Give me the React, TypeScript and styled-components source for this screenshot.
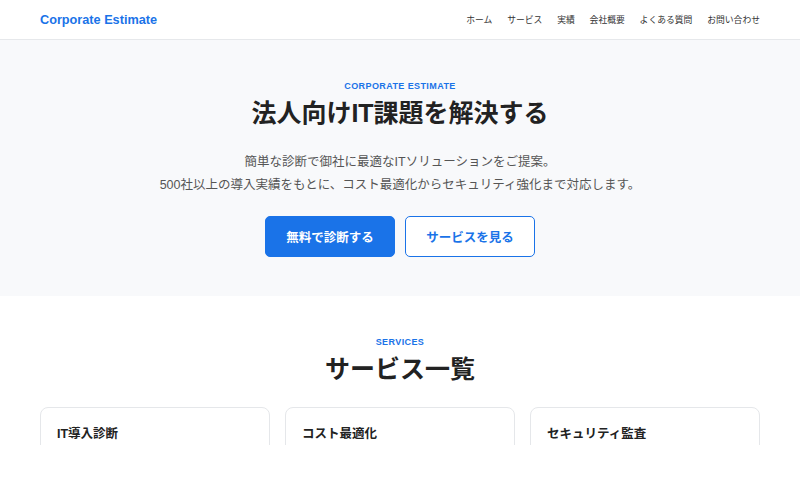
import React from "react";
import styled, { createGlobalStyle } from "styled-components";

const Global = createGlobalStyle`
  * { box-sizing: border-box; }
  html, body { margin: 0; padding: 0; background: #ffffff; }
  body {
    font-family: "Liberation Sans", "Noto Sans CJK JP", sans-serif;
    color: #222;
    -webkit-font-smoothing: antialiased;
  }
`;

const Page = styled.div`
  height: 445px;
  overflow: hidden;
  background: #fff;
`;

const Header = styled.header`
  height: 40px;
  border-bottom: 1px solid #e6e8eb;
  display: flex;
  align-items: center;
  justify-content: space-between;
  padding: 0 40px;
  background: #fff;
`;

const Logo = styled.div`
  color: #1a73e8;
  font-weight: 700;
  font-size: 12.7px;
`;

const Nav = styled.nav`
  display: flex;
  gap: 14.8px;
`;

const NavLink = styled.a`
  font-size: 8.8px;
  color: #333;
  text-decoration: none;
  font-family: "Noto Sans CJK JP", sans-serif;
`;

const Hero = styled.section`
  background: #f8f9fb;
  height: 256px;
  display: flex;
  flex-direction: column;
  align-items: center;
  padding-top: 40px;
`;

const Eyebrow = styled.div`
  color: #1a73e8;
  font-size: 9px;
  font-weight: 700;
  letter-spacing: 0.4px;
  line-height: 12px;
`;

const Title = styled.h1<{ $size: number }>`
  margin: 4px 0 0;
  font-size: ${(p) => p.$size}px;
  font-weight: 700;
  color: #222;
  line-height: 1.4;
  font-family: "Liberation Sans", "Noto Sans CJK JP", sans-serif;
`;

const Lead = styled.p`
  margin: 20px 0 0;
  font-size: 12.5px;
  line-height: 23px;
  color: #555;
  text-align: center;
`;

const Actions = styled.div`
  display: flex;
  gap: 10px;
  margin-top: 19px;
`;

const Button = styled.a<{ $primary?: boolean }>`
  width: 130px;
  height: 41px;
  display: flex;
  align-items: center;
  justify-content: center;
  border-radius: 5px;
  font-size: 12.5px;
  font-weight: 700;
  text-decoration: none;
  border: 1.5px solid #1a73e8;
  background: ${(p) => (p.$primary ? "#1a73e8" : "#fff")};
  color: ${(p) => (p.$primary ? "#fff" : "#1a73e8")};
`;

const Services = styled.section`
  display: flex;
  flex-direction: column;
  align-items: center;
  padding: 40px 40px 0;
`;

const Cards = styled.div`
  display: grid;
  grid-template-columns: repeat(3, 1fr);
  gap: 15px;
  width: 100%;
  margin-top: 20px;
`;

const Card = styled.div`
  border: 1px solid #e5e7ea;
  border-radius: 8px;
  height: 120px;
  padding: 17px 16px;
`;

const CardTitle = styled.h3`
  margin: 0;
  font-size: 12.5px;
  font-weight: 700;
  color: #222;
  line-height: 18px;
`;

const nav = ["ホーム", "サービス", "実績", "会社概要", "よくある質問", "お問い合わせ"];
const services = ["IT導入診断", "コスト最適化", "セキュリティ監査"];

export default function App() {
  return (
    <Page>
      <Global />
      <Header>
        <Logo>Corporate Estimate</Logo>
        <Nav>
          {nav.map((n) => (
            <NavLink key={n} href="#">
              {n}
            </NavLink>
          ))}
        </Nav>
      </Header>
      <Hero>
        <Eyebrow>CORPORATE ESTIMATE</Eyebrow>
        <Title $size={25}>法人向けIT課題を解決する</Title>
        <Lead>
          簡単な診断で御社に最適なITソリューションをご提案。
          <br />
          500社以上の導入実績をもとに、コスト最適化からセキュリティ強化まで対応します。
        </Lead>
        <Actions>
          <Button $primary href="#">無料で診断する</Button>
          <Button href="#">サービスを見る</Button>
        </Actions>
      </Hero>
      <Services>
        <Eyebrow>SERVICES</Eyebrow>
        <Title $size={25}>サービス一覧</Title>
        <Cards>
          {services.map((s) => (
            <Card key={s}>
              <CardTitle>{s}</CardTitle>
            </Card>
          ))}
        </Cards>
      </Services>
    </Page>
  );
}
